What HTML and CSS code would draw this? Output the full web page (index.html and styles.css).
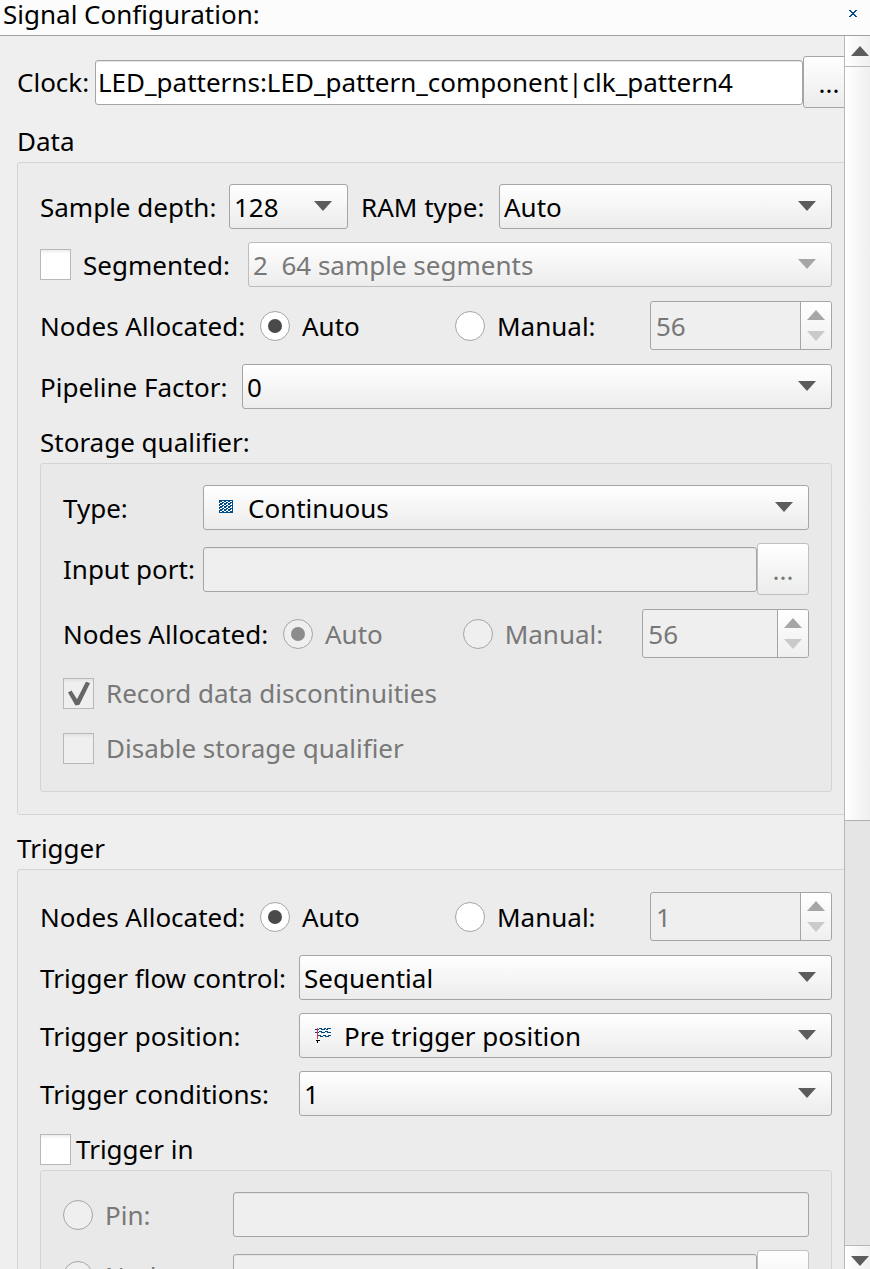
FILE: index.html
```html
<!DOCTYPE html>
<html lang="en">
<head>
<meta charset="utf-8">
<title>Signal Configuration</title>
<link rel="stylesheet" href="styles.css">
</head>
<body>
<div class="window">
  <header class="titlebar">
    <h1 class="title">Signal Configuration:</h1>
    <button class="close" aria-label="Close"><svg width="8" height="7" viewBox="0 0 8 7"><path d="M0 .5h2M6 .5h2M1 1.5h2M5 1.5h2M2 2.5h4M3 3.5h2M2 4.5h4M1 5.5h2M5 5.5h2M0 6.5h2M6 6.5h2" stroke="#004a86"/></svg></button>
  </header>
  <div class="body">
    <main class="panel">
      <form class="form">
        <div class="row clock">
          <label for="clock">Clock:</label>
          <div class="browse">
            <input class="field" id="clock" type="text" value="LED_patterns:LED_pattern_component|clk_pattern4">
            <button class="more" type="button" aria-label="Browse clock">...</button>
          </div>
        </div>

        <h2 class="heading">Data</h2>
        <section class="group">
          <div class="row">
            <label class="w-depth" for="depth">Sample depth:</label>
            <span class="combo small"><select id="depth"><option>128</option></select></span>
            <label class="w-ram" for="ram">RAM type:</label>
            <span class="combo"><select id="ram"><option>Auto</option></select></span>
          </div>
          <div class="row">
            <label class="check w-segmented"><input type="checkbox">Segmented:</label>
            <span class="combo"><select disabled aria-label="Segments"><option>2&nbsp; 64 sample segments</option></select></span>
          </div>
          <div class="nodes">
            <span>Nodes Allocated:</span>
            <label class="check"><input type="radio" name="dn" checked>Auto</label>
            <label class="check"><input type="radio" name="dn">Manual:</label>
            <span class="spin"><input type="number" value="56" disabled aria-label="Data nodes"><span class="steps"><button type="button" class="up" disabled aria-label="Increase"></button><button type="button" class="down" disabled aria-label="Decrease"></button></span></span>
          </div>
          <div class="row">
            <label class="w-pipeline" for="pipe">Pipeline Factor:</label>
            <span class="combo"><select id="pipe"><option>0</option></select></span>
          </div>
          <div>
            <h3 class="heading inner">Storage qualifier:</h3>
            <section class="group nested">
              <div class="row">
                <label class="w-storage" for="type">Type:</label>
                <span class="combo pictured">
                  <svg class="icon" width="16" height="16" viewBox="0 0 16 16" fill="none"><path d="M0 1h14v13H0z" fill="#004a86"/><path d="M1 3.5h12M1 6.5h12M1 9.5h12M1 12.5h12" stroke="#fff" stroke-dasharray="2 2"/><path d="M3 2.5h11M3 5.5h11M3 8.5h11M3 11.5h11" stroke="#fff" stroke-dasharray="2 2"/><path d="M0 4.5h14M0 7.5h14M0 10.5h14" stroke="#fff" stroke-dasharray="1 3"/></svg>
                  <select id="type"><option>Continuous</option></select>
                </span>
              </div>
              <div class="row">
                <label class="w-storage" for="port">Input port:</label>
                <div class="browse">
                  <input class="field" id="port" type="text" disabled>
                  <button class="more" type="button" disabled aria-label="Browse input port">...</button>
                </div>
              </div>
              <div class="nodes">
                <span>Nodes Allocated:</span>
                <label class="check off"><input type="radio" name="sn" checked disabled>Auto</label>
                <label class="check off"><input type="radio" name="sn" disabled>Manual:</label>
                <span class="spin"><input type="number" value="56" disabled aria-label="Storage nodes"><span class="steps"><button type="button" class="up" disabled aria-label="Increase"></button><button type="button" class="down" disabled aria-label="Decrease"></button></span></span>
              </div>
              <label class="check off option"><input type="checkbox" checked disabled>Record data discontinuities</label>
              <label class="check off option"><input type="checkbox" disabled>Disable storage qualifier</label>
            </section>
          </div>
        </section>

        <h2 class="heading">Trigger</h2>
        <section class="group">
          <div class="nodes">
            <span>Nodes Allocated:</span>
            <label class="check"><input type="radio" name="tn" checked>Auto</label>
            <label class="check"><input type="radio" name="tn">Manual:</label>
            <span class="spin"><input type="number" value="1" disabled aria-label="Trigger nodes"><span class="steps"><button type="button" class="up" disabled aria-label="Increase"></button><button type="button" class="down" disabled aria-label="Decrease"></button></span></span>
          </div>
          <div class="row">
            <label class="w-trigger" for="flow">Trigger flow control:</label>
            <span class="combo"><select id="flow"><option>Sequential</option></select></span>
          </div>
          <div class="row">
            <label class="w-trigger" for="pos">Trigger position:</label>
            <span class="combo pictured">
              <svg class="icon" width="16" height="16" viewBox="0 0 16 16" fill="none" stroke="#004a86"><path d="M0 2.5h4M4 1.5h3M6 2.5h4M9 1.5h2M11 2.5h2M12 1.5h4M0 5.5h4M4 4.5h3M6 5.5h4M10 4.5h3M12 5.5h4M3 8.5h3M5 9.5h3M8 8.5h3M10 9.5h4M13 8.5h3"/><path d="M2.5 1v11" stroke="#f0283c"/><path d="M1 13.5h4M2.5 13v3" stroke="#000"/></svg>
              <select id="pos"><option>Pre trigger position</option></select>
            </span>
          </div>
          <div class="row">
            <label class="w-trigger" for="cond">Trigger conditions:</label>
            <span class="combo"><select id="cond"><option>1</option></select></span>
          </div>
          <div>
            <label class="check heading inner tight"><input type="checkbox">Trigger in</label>
            <section class="group nested">
              <div class="row">
                <label class="check off w-pin" for="pin-on"><input id="pin-on" type="radio" name="src" disabled>Pin:</label>
                <input class="field" type="text" disabled aria-label="Pin name">
              </div>
              <div class="row">
                <label class="check off w-pin" for="node-on"><input id="node-on" type="radio" name="src" disabled>Node:</label>
                <div class="browse">
                  <input class="field" type="text" disabled aria-label="Node name">
                  <button class="more" type="button" disabled aria-label="Browse node">...</button>
                </div>
              </div>
            </section>
          </div>
        </section>
      </form>
    </main>
    <div class="scrollbar">
      <button class="arrow up" aria-label="Scroll up"></button>
      <div class="track"><div class="thumb"></div></div>
      <button class="arrow down" aria-label="Scroll down"></button>
    </div>
  </div>
</div>
</body>
</html>
```

FILE: styles.css
```css
* { box-sizing: border-box; }

body {
  margin: 0;
  background: #efefef;
  color: #000;
  font: 26px/36px "Noto Sans", "Open Sans", sans-serif;
}

input, select, button { font: inherit; color: inherit; margin: 0; }

.window { height: 100vh; display: flex; flex-direction: column; overflow: hidden; }

.titlebar {
  flex: none;
  height: 36px;
  display: flex;
  align-items: flex-start;
  justify-content: space-between;
  padding: 0 13px 0 3px;
  background: #fcfcfc;
  border-bottom: 1px solid #a0a0a0;
}
.title { margin: 0; font-size: 26px; font-weight: 400; line-height: 28px; }
.close { display: flex; padding: 10px 0; border: 0; background: none; }

.body { flex: 1; min-height: 0; display: flex; margin-right: -5px; }
.panel { flex: 1; min-width: 0; overflow: hidden; }
.form { margin-right: -11px; padding: 20px 0 0 17px; }

.row { display: flex; align-items: center; gap: 13px; }
.row > label { flex: none; white-space: nowrap; }
.clock { gap: 6px; }
.clock > label { width: 72px; }

.heading {
  margin: 16px 0 0;
  height: 38px;
  font-size: 26px;
  font-weight: 400;
  line-height: 34px;
}
.heading.inner { margin-top: 3px; }

.group {
  display: flex;
  flex-direction: column;
  gap: 13px;
  padding: 21px 22px 22px;
  background: #ececec;
  border: 1px solid #d4d4d4;
  border-radius: 3px;
}
.group.nested { background: #e9e9e9; }

.w-depth { width: 176px; }
.w-ram { width: 125px; }
.w-segmented { width: 195px; }
.w-pipeline { width: 189px; }
.w-storage { width: 127px; }
.w-trigger { width: 246px; }
.w-pin { width: 157px; }

.field {
  flex: 1;
  min-width: 0;
  width: 100%;
  height: 45px;
  padding: 0 2px;
  border: 1px solid #a5a5a5;
  border-radius: 3px;
  background: #fff;
  box-shadow: inset 0 1px #e4e4e4;
}
.field:disabled { background: #efefef; }

.browse { flex: 1; min-width: 0; display: flex; align-items: center; }
.more {
  flex: none;
  width: 52px;
  height: 52px;
  padding: 2px 0 0;
  border: 1px solid #a5a5a5;
  border-radius: 3px;
  background: linear-gradient(#fff, #ececec);
}
.more:disabled { color: #787878; border-color: #c0c0c0; }

.combo { position: relative; flex: 1; min-width: 0; display: flex; }
.combo.small { flex: none; width: 119px; }
.combo select {
  appearance: none;
  width: 100%;
  height: 45px;
  padding: 0 40px 0 4px;
  border: 1px solid #a5a5a5;
  border-radius: 3px;
  background: linear-gradient(#fff, #ececec);
  opacity: 1;
}
.combo select:disabled { color: #787878; border-color: #bcbcbc; }
.combo::after {
  content: "";
  position: absolute;
  right: 16px;
  top: 17px;
  width: 18px;
  height: 10px;
  background: #5c5c5c;
  clip-path: polygon(0 0, 100% 0, 50% 100%);
  pointer-events: none;
}
.combo:has(select:disabled)::after { background: #a6a6a6; }
.combo .icon { position: absolute; left: 16px; top: 14px; pointer-events: none; }
.combo.pictured select { padding-left: 44px; }

.check { display: flex; align-items: center; gap: 12px; white-space: nowrap; }
.check.off { color: #787878; }
.check.option { height: 42px; }
.check.tight { gap: 5px; padding-bottom: 4px; }

input[type="checkbox"] {
  appearance: none;
  flex: none;
  width: 31px;
  height: 31px;
  border: 1px solid #b8b8b8;
  background: linear-gradient(#ececec, #fff 4px);
}
input[type="checkbox"]:disabled { background: linear-gradient(#e2e2e2, #efefef 4px); }
input[type="checkbox"]:checked::before {
  content: "";
  display: block;
  width: 22px;
  height: 24px;
  margin: 3px 0 0 4px;
  background: #666;
  clip-path: polygon(0 46%, 16% 38%, 41% 74%, 82% 0, 100% 7%, 52% 97%, 34% 100%);
}

input[type="radio"] {
  appearance: none;
  flex: none;
  width: 30px;
  height: 30px;
  border: 1px solid #a5a5a5;
  border-radius: 50%;
  background: #fff;
}
input[type="radio"]:disabled { background: #efefef; }
input[type="radio"]:checked::before {
  content: "";
  display: block;
  width: 14px;
  height: 14px;
  margin: 7px;
  border-radius: 50%;
  background: #4a4a4a;
}
input[type="radio"]:checked:disabled::before { background: #8c8c8c; }

.nodes {
  display: grid;
  grid-template-columns: 207px 1fr 1fr 1fr;
  gap: 13px;
  align-items: center;
  height: 51px;
  white-space: nowrap;
}

.spin {
  display: flex;
  min-width: 0;
  height: 49px;
  border: 1px solid #a5a5a5;
  border-radius: 3px;
  background: #efefef;
  overflow: hidden;
  color: #787878;
}
.spin input {
  appearance: textfield;
  flex: 1;
  width: 0;
  min-width: 0;
  padding: 0 5px;
  border: 0;
  background: none;
}
.spin input::-webkit-inner-spin-button { display: none; }
.steps {
  width: 31px;
  display: flex;
  flex-direction: column;
  justify-content: center;
  align-items: center;
  gap: 11px;
  border-left: 1px solid #a5a5a5;
  background: linear-gradient(#fff, #efefef);
}
.steps button { width: 18px; height: 10px; padding: 0; border: 0; background: #a6a6a6; }
.steps .up { clip-path: polygon(50% 0, 100% 100%, 0 100%); }
.steps .down { clip-path: polygon(0 0, 100% 0, 50% 100%); background: #cacaca; }

.scrollbar {
  flex: none;
  width: 31px;
  margin-bottom: -7px;
  display: flex;
  flex-direction: column;
  border-left: 1px solid #b8b8b8;
  background: #e5e5e5;
}
.arrow {
  flex: none;
  height: 31px;
  padding: 0;
  display: flex;
  align-items: center;
  justify-content: center;
  border: 0 solid #b8b8b8;
  background: linear-gradient(90deg, #fff, #ececec);
}
.arrow.up { border-bottom-width: 1px; }
.arrow.down { border-top-width: 1px; }
.arrow::before { content: ""; width: 18px; height: 10px; background: #5c5c5c; }
.arrow.up::before { clip-path: polygon(50% 0, 100% 100%, 0 100%); }
.arrow.down::before { clip-path: polygon(0 0, 100% 0, 50% 100%); }
.track { flex: 1; }
.thumb {
  height: 64%;
  border-bottom: 1px solid #b0b0b0;
  background: linear-gradient(90deg, #fff, #ececec);
}
```
